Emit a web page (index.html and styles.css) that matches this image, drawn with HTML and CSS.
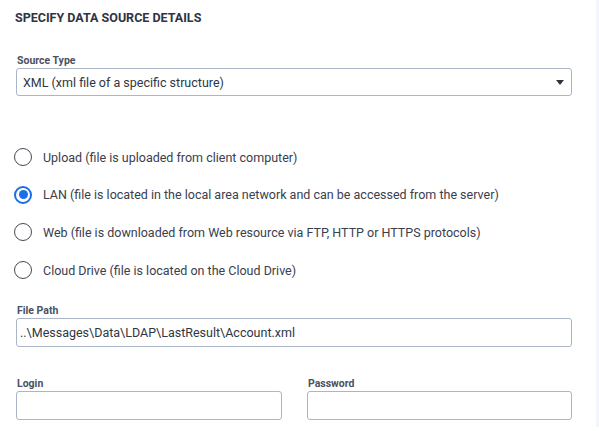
FILE: index.html
```html
<!DOCTYPE html>
<html>
<head>
<meta charset="utf-8">
<link rel="stylesheet" href="styles.css">
</head>
<body>
<div class="page">
  <main class="panel">
    <h1 class="title">SPECIFY DATA SOURCE DETAILS</h1>

    <div class="field field-source">
      <label class="label">Source Type</label>
      <div class="select">
        <span class="select-text">XML (xml file of a specific structure)</span>
        <span class="caret"></span>
      </div>
    </div>

    <div class="radios">
      <div class="radio-row"><span class="radio"></span><span class="radio-text">Upload (file is uploaded from client computer)</span></div>
      <div class="radio-row"><span class="radio checked"></span><span class="radio-text">LAN (file is located in the local area network and can be accessed from the server)</span></div>
      <div class="radio-row"><span class="radio"></span><span class="radio-text">Web (file is downloaded from Web resource via FTP, HTTP or HTTPS protocols)</span></div>
      <div class="radio-row"><span class="radio"></span><span class="radio-text">Cloud Drive (file is located on the Cloud Drive)</span></div>
    </div>

    <div class="field field-path">
      <label class="label">File Path</label>
      <div class="input"><span class="input-text">..\Messages\Data\LDAP\LastResult\Account.xml</span></div>
    </div>

    <div class="cred-row">
      <div class="field">
        <label class="label">Login</label>
        <div class="input"></div>
      </div>
      <div class="field">
        <label class="label">Password</label>
        <div class="input"></div>
      </div>
    </div>
  </main>
  <div class="gutter"></div>
</div>
</body>
</html>
```

FILE: styles.css
```css
* { box-sizing: border-box; }
html, body { margin: 0; padding: 0; background: #ffffff; }
body {
  font-family: Roboto, "Liberation Sans", Arial, sans-serif;
  color: #3a404d;
  width: 599px;
  height: 431px;
  overflow: hidden;
}
.page {
  display: flex;
  align-items: flex-start;
}
.panel {
  width: 596px;
  padding: 10px 0 0 16px;
}
.gutter {
  width: 3px;
  height: 427px;
  background: #f4f6fb;
}
.title {
  margin: 0 0 0 -1px;
  font-size: 12.5px;
  line-height: 16px;
  font-weight: 700;
  color: #2e3442;
}
.field { display: flex; flex-direction: column; }
.field-source { margin-top: 29px; width: 556px; }
.label {
  font-size: 10.5px;
  line-height: 12px;
  font-weight: 700;
  color: #4b5160;
  margin: 0 0 1px 1px;
}
.select, .input {
  height: 28px;
  border: 1px solid #aab5c7;
  border-radius: 3px;
  background: #fff;
  display: flex;
  align-items: center;
}
.select { padding: 0 7px 0 6px; justify-content: space-between; }
.select-text, .input-text {
  font-size: 12.5px;
  color: #30363f;
}
.caret {
  width: 0; height: 0;
  border-left: 4.5px solid transparent;
  border-right: 4.5px solid transparent;
  border-top: 5px solid #2f3340;
}
.radios {
  margin-top: 52px;
  display: flex;
  flex-direction: column;
  gap: 19.7px;
}
.radio-row {
  display: flex;
  align-items: center;
  height: 18px;
  margin-left: -2px;
}
.radio {
  width: 18px; height: 18px;
  border: 1.5px solid #454a54;
  border-radius: 50%;
  flex: none;
  display: flex;
  align-items: center;
  justify-content: center;
}
.radio.checked { border: 2px solid #1a6ee8; }
.radio.checked::after {
  content: "";
  width: 9px; height: 9px;
  border-radius: 50%;
  background: #1a6ee8;
}
.radio-text {
  margin-left: 11px;
  font-size: 12.5px;
  color: #3a404d;
}
.field-path { margin-top: 26px; width: 556px; }
.field-path .input { height: 29px; padding-left: 3px; }
.cred-row {
  margin-top: 31px;
  display: grid;
  grid-template-columns: 266px 265px;
  column-gap: 25px;
}
.cred-row .input { height: 29px; }
```
